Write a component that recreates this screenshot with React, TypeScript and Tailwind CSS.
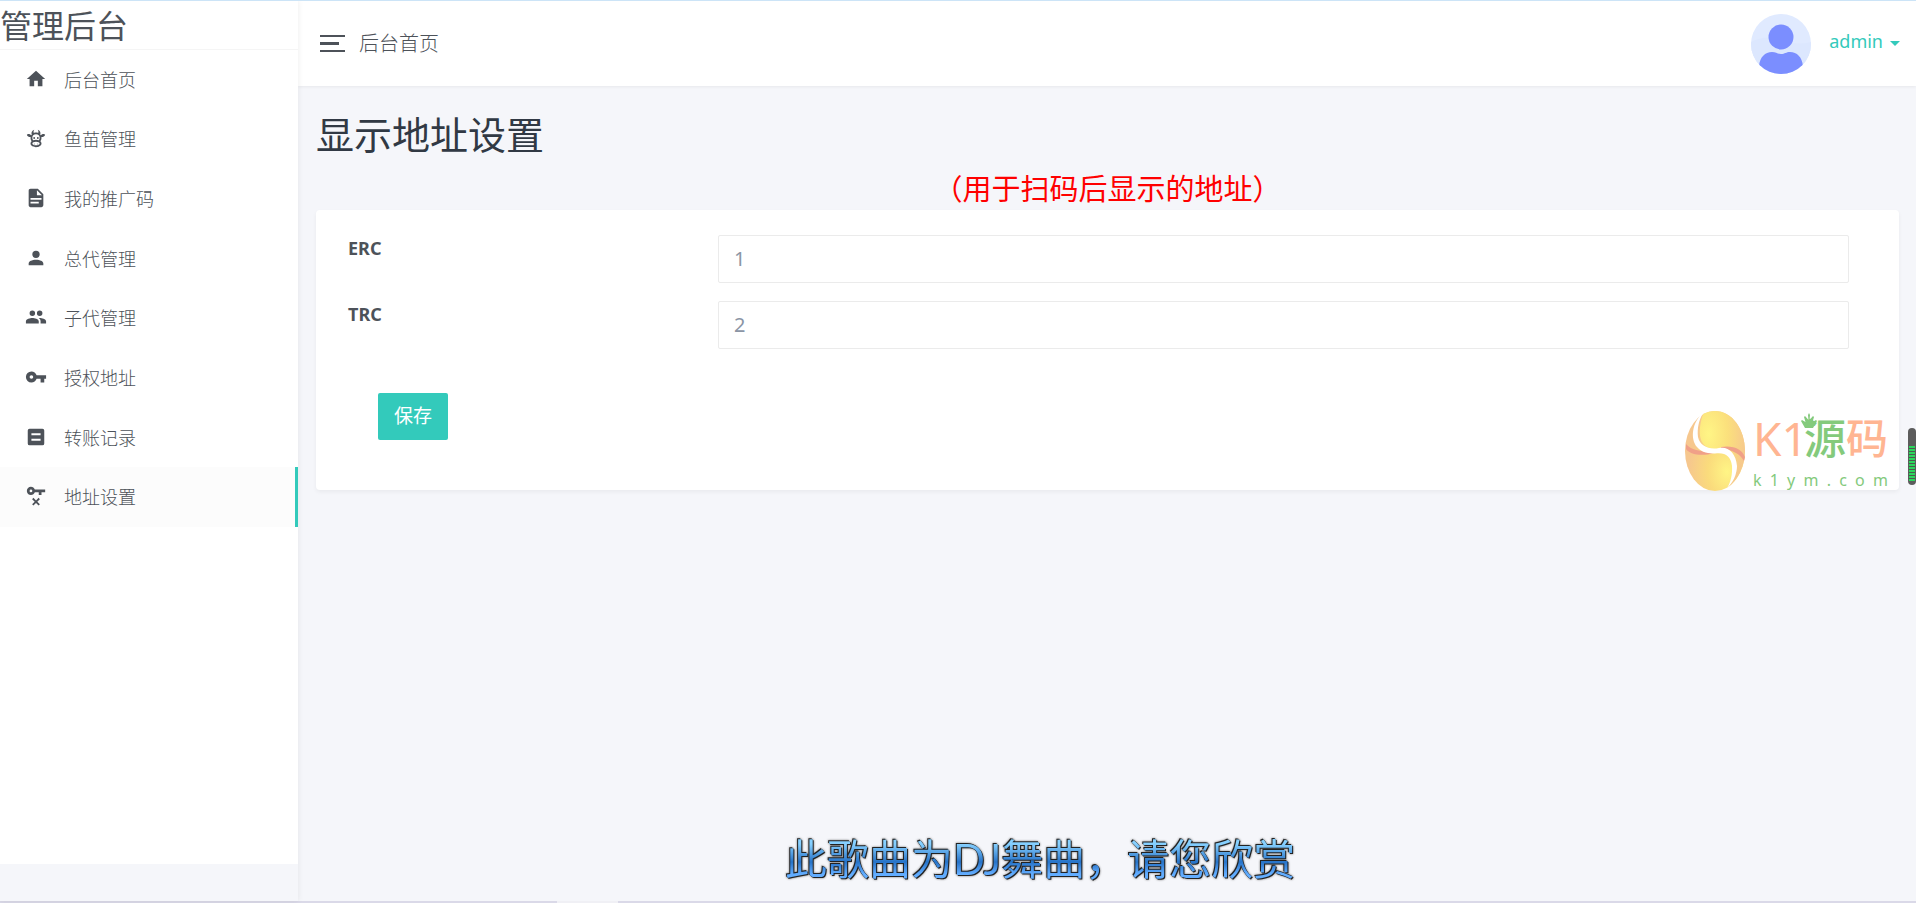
import { useId, useState } from 'react'

const menu = [
  { name: '后台首页', icon: 'home' },
  { name: '鱼苗管理', icon: 'cow' },
  { name: '我的推广码', icon: 'file' },
  { name: '总代管理', icon: 'account' },
  { name: '子代管理', icon: 'accounts' },
  { name: '授权地址', icon: 'key' },
  { name: '转账记录', icon: 'note' },
  { name: '地址设置', icon: 'keyRemove' },
]

const iconPaths: Record<string, string> = {
  home: 'M10,20V14H14V20H19V12H22L12,3L2,12H5V20H10Z',
  cow: 'M10.5,18A.5.5 0 0,1 11,18.5.5.5 0 0,1 10.5,19 .5.5 0 0,1 10,18.5 .5.5 0 0,1 10.5,18M13.5,18A.5.5 0 0,1 14,18.5 .5.5 0 0,1 13.5,19 .5.5 0 0,1 13,18.5 .5.5 0 0,1 13.5,18M10,11A1,1 0 0,1 11,12A1,1 0 0,1 10,13A1,1 0 0,1 9,12A1,1 0 0,1 10,11M14,11A1,1 0 0,1 15,12A1,1 0 0,1 14,13A1,1 0 0,1 13,12A1,1 0 0,1 14,11M18,18C18,20.21 15.31,22 12,22C8.69,22 6,20.21 6,18C6,17.1 6.45,16.27 7.2,15.6C6.45,14.6 6,13.35 6,12L6.12,10.78C5.58,10.93 4.93,10.93 4.4,10.78C3.38,10.5 1.84,9.35 2.07,8.55C2.3,7.75 4.21,7.6 5.23,7.9C5.82,8.07 6.45,8.5 6.82,8.96L7.39,8.15C6.79,7.05 7,4 10,3L9.91,3.14V3.14C9.63,3.58 8.91,4.97 9.67,6.47C10.39,6.17 11.17,6 12,6C12.83,6 13.61,6.17 14.33,6.47C15.09,4.97 14.37,3.58 14.09,3.14L14,3C17,4 17.21,7.05 16.61,8.15L17.18,8.96C17.55,8.5 18.18,8.07 18.77,7.9C19.79,7.6 21.7,7.75 21.93,8.55C22.16,9.35 20.62,10.5 19.6,10.78C19.07,10.93 18.42,10.93 17.88,10.78L18,12C18,13.35 17.55,14.6 16.8,15.6C17.55,16.27 18,17.1 18,18M12,16C9.79,16 8,16.9 8,18C8,19.1 9.79,20 12,20C14.21,20 16,19.1 16,18C16,16.9 14.21,16 12,16M12,14C13.12,14 14.17,14.21 15.07,14.56C15.65,13.87 16,13 16,12A4,4 0 0,0 12,8A4,4 0 0,0 8,12C8,13 8.35,13.87 8.93,14.56C9.83,14.21 10.88,14 12,14Z',
  file: 'M13,9H18.5L13,3.5V9M6,2H14L20,8V20A2,2 0 0,1 18,22H6C4.89,22 4,21.1 4,20V4C4,2.89 4.89,2 6,2M15,18V16H6V18H15M18,14V12H6V14H18Z',
  account: 'M12,4A4,4 0 0,1 16,8A4,4 0 0,1 12,12A4,4 0 0,1 8,8A4,4 0 0,1 12,4M12,14C16.42,14 20,15.79 20,18V20H4V18C4,15.79 7.58,14 12,14Z',
  accounts: 'M16,13C15.71,13 15.38,13 15.03,13.05C16.19,13.89 17,15 17,16.5V19H23V16.5C23,14.17 18.33,13 16,13M8,13C5.67,13 1,14.17 1,16.5V19H15V16.5C15,14.17 10.33,13 8,13M8,11A3,3 0 0,0 11,8A3,3 0 0,0 8,5A3,3 0 0,0 5,8A3,3 0 0,0 8,11M16,11A3,3 0 0,0 19,8A3,3 0 0,0 16,5A3,3 0 0,0 13,8A3,3 0 0,0 16,11Z',
  key: 'M7,14A2,2 0 0,1 5,12A2,2 0 0,1 7,10A2,2 0 0,1 9,12A2,2 0 0,1 7,14M12.65,10C11.83,7.67 9.61,6 7,6A6,6 0 0,0 1,12A6,6 0 0,0 7,18C9.61,18 11.83,16.33 12.65,14H17V18H21V14H23V10H12.65Z',
  note: 'M5,3H19A2,2 0 0,1 21,5V19A2,2 0 0,1 19,21H5A2,2 0 0,1 3,19V5A2,2 0 0,1 5,3M7,8V10H17V8H7M7,14V16H17V14H7Z',
  keyRemove: 'M6.5,2C8.46,2 10.13,3.25 10.74,5H22V8H18V11H15V8H10.74C10.13,9.75 8.46,11 6.5,11C4,11 2,9 2,6.5C2,4 4,2 6.5,2M6.5,5A1.5,1.5 0 0,0 5,6.5A1.5,1.5 0 0,0 6.5,8A1.5,1.5 0 0,0 8,6.5A1.5,1.5 0 0,0 6.5,5M9.17,14L12,16.83L14.83,14L16.24,15.41L13.41,18.24L16.24,21.07L14.83,22.48L12,19.65L9.17,22.48L7.76,21.07L10.59,18.24L7.76,15.41L9.17,14Z',
}

function MenuIcon({ name }: { name: string }) {
  return (
    <svg viewBox="0 0 24 24" className="mb-[2px] size-[22px] shrink-0" fill="currentColor" fillRule="evenodd" aria-hidden="true">
      <path d={iconPaths[name]} />
    </svg>
  )
}

function Sidebar() {
  return (
    <aside className="w-[298px] shrink-0 shadow-[0_0_6px_rgba(0,0,0,0.08)] z-10">
      <div className="h-[calc(100vh-40px)] bg-white">
        <div className="h-[49px] border-b border-[#f5f5f5] text-[32px] leading-[50px] font-normal">
          <a href="#">管理后台</a>
        </div>
        <nav className="flex h-[477px] flex-col">
          {menu.map((m, i) => (
            <a
              key={m.name}
              href="#"
              className={`flex flex-1 items-center gap-[17px] border-r-3 pl-[25px] text-lg ${i === menu.length - 1 ? 'border-[#33cabb] bg-[#fcfcfc]' : 'border-transparent'}`}
            >
              <MenuIcon name={m.icon} />
              <span>{m.name}</span>
            </a>
          ))}
        </nav>
      </div>
    </aside>
  )
}

function Avatar() {
  const clip = useId()
  return (
    <svg viewBox="0 0 60 60" className="size-15" aria-hidden="true">
      <clipPath id={clip}>
        <circle cx="30" cy="30" r="30" />
      </clipPath>
      <g clipPath={`url(#${clip})`}>
        <rect width="60" height="60" fill="#e0eaff" />
        <path d="M0 28Q15 20 30 26T60 28V60H0Z" fill="#dce7fe" />
        <circle cx="30" cy="23" r="12.5" fill="#7b8eff" />
        <path d="M8 60V52C9 43 14 38 21 38C25 38 26 40 30 40S35 38 39 38C46 38 51 43 52 52V60Z" fill="#7b8eff" />
      </g>
    </svg>
  )
}

function Header() {
  return (
    <header className="flex h-[85px] items-center bg-white pr-4 pl-[22px] shadow-[0_1px_3px_rgba(0,0,0,0.06)]">
      <button type="button" aria-label="菜单" className="flex flex-col gap-[5px]">
        <span className="h-[2px] w-[25px] bg-[#4d5259]" />
        <span className="h-[3px] w-[19px] bg-[#4d5259]" />
        <span className="h-[2px] w-[25px] bg-[#4d5259]" />
      </button>
      <span className="ml-[14px] text-xl">后台首页</span>
      <button type="button" className="ml-auto flex items-center text-lg font-normal text-[#33cabb]">
        <Avatar />
        <span className="ml-[18px] pb-[6px]">admin</span>
        <svg viewBox="0 0 10 5" className="ml-[7px] h-[5px] w-[10px]" fill="currentColor" aria-hidden="true">
          <path d="M0 0H10L5 5Z" />
        </svg>
      </button>
    </header>
  )
}

function Field({ label, initial }: { label: string; initial: string }) {
  const id = useId()
  const [value, setValue] = useState(initial)
  return (
    <div className="flex">
      <label htmlFor={id} className="w-1/4 pl-8 text-lg leading-[26px] font-bold">
        {label}
      </label>
      <div className="w-3/4 px-[15px]">
        <input
          id={id}
          value={value}
          onChange={e => setValue(e.target.value)}
          className="h-12 w-full rounded-xs border border-[#ebebeb] bg-white px-[15px] pb-[2px] text-xl font-normal text-[#8b95a5] outline-none"
        />
      </div>
    </div>
  )
}

function Watermark() {
  const gold = useId()
  const shade = useId()
  return (
    <div className="absolute top-[410px] right-7 flex items-start gap-2">
      <svg viewBox="0 0 60 80" className="h-20 w-15" aria-hidden="true">
        <defs>
          <radialGradient id={gold} cx="0.2" cy="0.3" r="0.85">
            <stop offset="0" stopColor="#fff585" />
            <stop offset="0.5" stopColor="#fbe07c" />
            <stop offset="1" stopColor="#f6c78e" />
          </radialGradient>
          <radialGradient id={shade} cx="0.7" cy="0.76" r="0.65">
            <stop offset="0" stopColor="#fff585" />
            <stop offset="0.5" stopColor="#fadb7c" />
            <stop offset="1" stopColor="#f6c78e" />
          </radialGradient>
        </defs>
        <ellipse cx="30" cy="40" rx="30" ry="40" fill={`url(#${shade})`} />
        <path d="M18 3C22 1 26 0 30 0C47 0 60 18 60 40C60 54 53 70 42 77C50 68 54 54 48 43L30 38C18 38 10 28 18 3Z" fill={`url(#${gold})`} />
        <path d="M1 33C6 39 14 40 29 42C16 46 4 43 1 38Z" fill="#f0a088" />
        <path d="M36 36C48 34 57 38 60 46L59 50C55 43 48 39 36 37Z" fill="#f0a088" />
        <path d="M18 2C7 11 5 28 12 36C17 42 24 42.500 30 42.500C40 41 46 45 47 55C47.500 63 46 71 42 77C48 72 52 63 52 55C51 42 43 35 34 37C24 39 15 35 13 26C12 17 14 9 18 2Z" fill="#fff" />
      </svg>
      <div className="text-[#84ca7c]">
        <div className="relative flex h-[54px] items-center text-[42px] leading-[54px] font-medium text-[#ffb592]">
          <span className="w-[51px] text-[46px] font-normal">K1</span>
          <span className="text-[#84ca7c]">源</span>
          <span>码</span>
          <svg viewBox="0 0 16 16" className="absolute top-[2px] left-12 size-4" fill="#84ca7c" aria-hidden="true">
            <path d="M8 0L9 2L8.500 7L12 3L13 4L11.500 9L15 7L16 8L12 15H4L0 8L1 7L4.500 9L3 4L4 3L7.500 7L7 2Z" />
          </svg>
        </div>
        <div className="mt-[5px] flex justify-between text-base leading-5 font-normal">
          {'k1ym.com'.split('').map((c, i) => (
            <span key={i}>{c}</span>
          ))}
        </div>
      </div>
    </div>
  )
}

export default function App() {
  return (
    <div className="relative flex h-screen flex-col overflow-hidden border-t border-[#cce4f7] bg-[#f5f6fa] font-['Noto_Sans','Noto_Sans_CJK_SC',sans-serif] font-light text-[#4d5259]">
      <div className="flex min-h-0 flex-1">
        <Sidebar />
        <div className="min-w-0 flex-1">
          <Header />
          <main className="pt-[23px] pr-[17px] pl-[18px]">
            <h1 className="text-[38px] leading-[50px] font-normal text-[#313944]">显示地址设置</h1>
            <p className="mt-[9px] text-center text-[29px] leading-[42px] font-normal text-[#ff0000]">（用于扫码后显示的地址）</p>
            <form
              className="flex flex-col gap-[18px] rounded bg-white pt-[25px] pr-[35px] pb-[50px] shadow-[0_2px_4px_rgba(0,0,0,0.05)]"
              onSubmit={e => e.preventDefault()}
            >
              <Field label="ERC" initial="1" />
              <Field label="TRC" initial="2" />
              <div className="px-[62px] pt-[26px]">
                <button type="submit" className="h-[47px] w-[70px] rounded-xs bg-[#33cabb] text-[19px] font-normal text-white">
                  保存
                </button>
              </div>
            </form>
          </main>
        </div>
      </div>
      <footer className="flex h-[2px]">
        <div className="w-[557px] bg-[#dad9e8]" />
        <div className="w-[61px] bg-[#f0f0f5]" />
        <div className="flex-1 bg-[#dad9e8]" />
      </footer>

      <Watermark />

      <div className="absolute top-[427px] right-0 h-[57px] w-2 overflow-hidden rounded-full bg-[#5c5c5c] px-px pt-[18px] pb-1">
        <div className="h-full bg-[repeating-linear-gradient(to_bottom,#2bd65c_0px,#2bd65c_2px,#4a5c4e_2px,#4a5c4e_3px)]" />
      </div>

      <p className="absolute bottom-[14px] left-[785px] bg-linear-to-b from-[#86d0ff] from-25% via-[#2673c8] via-55% to-[#62adff] to-75% bg-clip-text font-['Lato','Noto_Sans_CJK_SC',sans-serif] text-[42px] leading-[60px] font-normal whitespace-nowrap text-transparent filter-[drop-shadow(1px_1px_0_#222)_drop-shadow(-1px_-1px_0_#222)_drop-shadow(0_0_1px_#777)]">
        此歌曲为DJ舞曲，请您欣赏
      </p>
    </div>
  )
}
